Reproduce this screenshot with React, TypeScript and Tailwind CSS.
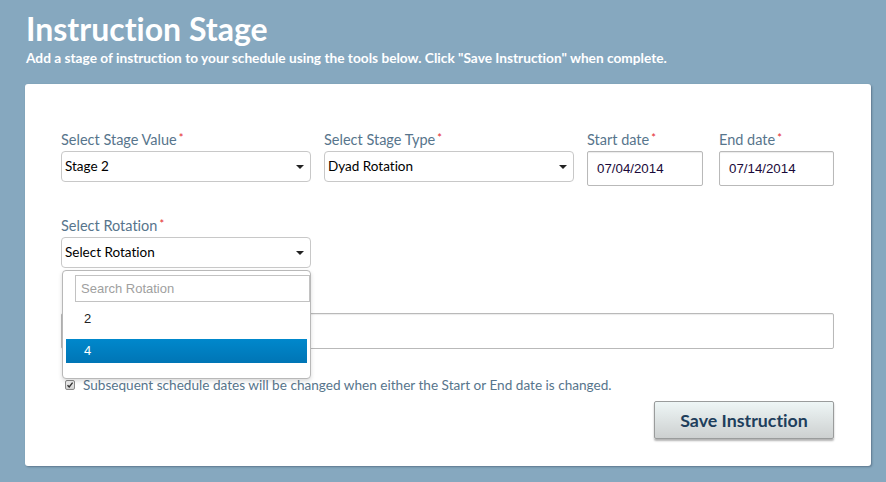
const ui = { fontFamily: "Lato, 'Open Sans', sans-serif", fontVariantLigatures: "none" } as const;
const arial = { fontFamily: "'Liberation Sans', Arial, sans-serif" };

function Label({ text }: { text: string }) {
  return (
    <div className="text-[14.5px] text-[#57758c] leading-4 mb-[3px] h-4" style={ui}>
      {text}
      <span className="text-[#e4262a] ml-[2px] relative -top-[3px] text-[11px]">*</span>
    </div>
  );
}

function Caret() {
  return (
    <svg width="8" height="4" viewBox="0 0 8 4" className="shrink-0">
      <path d="M0 0h8L4 4z" fill="#222" />
    </svg>
  );
}

function FakeSelect({ value, width }: { value: string; width: string }) {
  return (
    <div
      className={`${width} h-[31px] border border-[#c8c8c8] rounded-[4px] bg-white flex items-center justify-between pl-[3px] pr-[6px] text-[13.5px] text-black`}
      style={ui}
    >
      <span>{value}</span>
      <Caret />
    </div>
  );
}

function DateInput({ value, width }: { value: string; width: string }) {
  return (
    <div
      className={`${width} h-[35px] border border-[#b9b9b9] rounded-[2px] bg-white flex items-center pl-[9px] text-[13.3px] text-[#1a0a3a] shadow-[inset_0_1px_1px_rgba(0,0,0,0.08)]`}
      style={arial}
    >
      {value}
    </div>
  );
}

export default function App() {
  return (
    <div className="w-[886px] h-[482px] bg-[#86a8bf] overflow-hidden" style={ui}>
      <div className="pl-[26px] pt-[10px]">
        <h1 className="text-[32px] font-bold text-white leading-[38px]">Instruction Stage</h1>
        <p className="text-[13.7px] font-bold text-white leading-4 mt-[2px]">
          Add a stage of instruction to your schedule using the tools below. Click "Save Instruction" when complete.
        </p>
      </div>

      <div className="ml-[25px] mt-[18px] w-[846px] h-[382px] bg-white rounded-[3px] shadow-[1px_1px_2px_rgba(40,60,80,0.45)] pl-[36px] pr-[37px] pt-[48px]">
        {/* row 1 */}
        <div className="flex">
          <div className="w-[250px]">
            <Label text="Select Stage Value" />
            <FakeSelect value="Stage 2" width="w-[250px]" />
          </div>
          <div className="w-[250px] ml-[13px]">
            <Label text="Select Stage Type" />
            <FakeSelect value="Dyad Rotation" width="w-[250px]" />
          </div>
          <div className="w-[116px] ml-[13px]">
            <Label text="Start date" />
            <DateInput value="07/04/2014" width="w-[116px]" />
          </div>
          <div className="w-[115px] ml-[16px]">
            <Label text="End date" />
            <DateInput value="07/14/2014" width="w-[115px]" />
          </div>
        </div>

        {/* row 2 */}
        <div className="mt-[32px] relative w-[250px] z-10">
          <Label text="Select Rotation" />
          <FakeSelect value="Select Rotation" width="w-[250px]" />
          <div className="absolute left-[1px] top-[52px] w-[249px] h-[109px] bg-white border border-[#b8b8b8] rounded-[4px] shadow-[0_2px_4px_rgba(0,0,0,0.15)] px-[3px] pt-[4px]">
            <div
              className="ml-[9px] w-[235px] h-[27px] border border-[#c2c2c2] flex items-center pl-[5px] text-[13px] text-[#a0a0a0]"
              style={arial}
            >
              Search Rotation
            </div>
            <div className="h-[38px] pb-[4px] flex items-center pl-[18px] text-[13px] text-[#222]" style={arial}>
              2
            </div>
            <div
              className="h-[24px] -mt-[1px] bg-gradient-to-b from-[#0088cc] to-[#0075b5] flex items-center pl-[18px] text-[13px] text-white"
              style={arial}
            >
              4
            </div>
          </div>
        </div>

        {/* row 3, mostly hidden under the open dropdown */}
        <div className="mt-[26px]">
          <div className="h-4 mb-[3px]" />
          <div className="w-[773px] h-[36px] border border-[#b9b9b9] rounded-[2px] bg-white shadow-[inset_0_1px_1px_rgba(0,0,0,0.08)]" />
        </div>

        {/* checkbox */}
        <div className="mt-[28px] flex items-center pl-[4px] h-4">
          <span className="w-[10px] h-[10px] border border-[#8a8a8a] rounded-[2px] bg-gradient-to-b from-[#f4f4f4] to-[#d0d0d0] flex items-center justify-center">
            <svg width="8" height="8" viewBox="0 0 8 8">
              <path d="M1.5 4.2 3.2 6 6.6 1.6" stroke="#333" strokeWidth="1.4" fill="none" />
            </svg>
          </span>
          <span className="ml-[8px] text-[13.6px] text-[#57758c]">
            Subsequent schedule dates will be changed when either the Start or End date is changed.
          </span>
        </div>

        {/* button */}
        <div className="flex justify-end mt-[8px]">
          <button className="w-[180px] h-[38px] border border-[#9a9c9c] rounded-[2px] bg-gradient-to-b from-[#eef6f6] to-[#cdd0d0] shadow-[0_2px_2px_rgba(0,0,0,0.3)] text-[17.8px] font-bold text-[#1e3e5c]">
            Save Instruction
          </button>
        </div>
      </div>
    </div>
  );
}
